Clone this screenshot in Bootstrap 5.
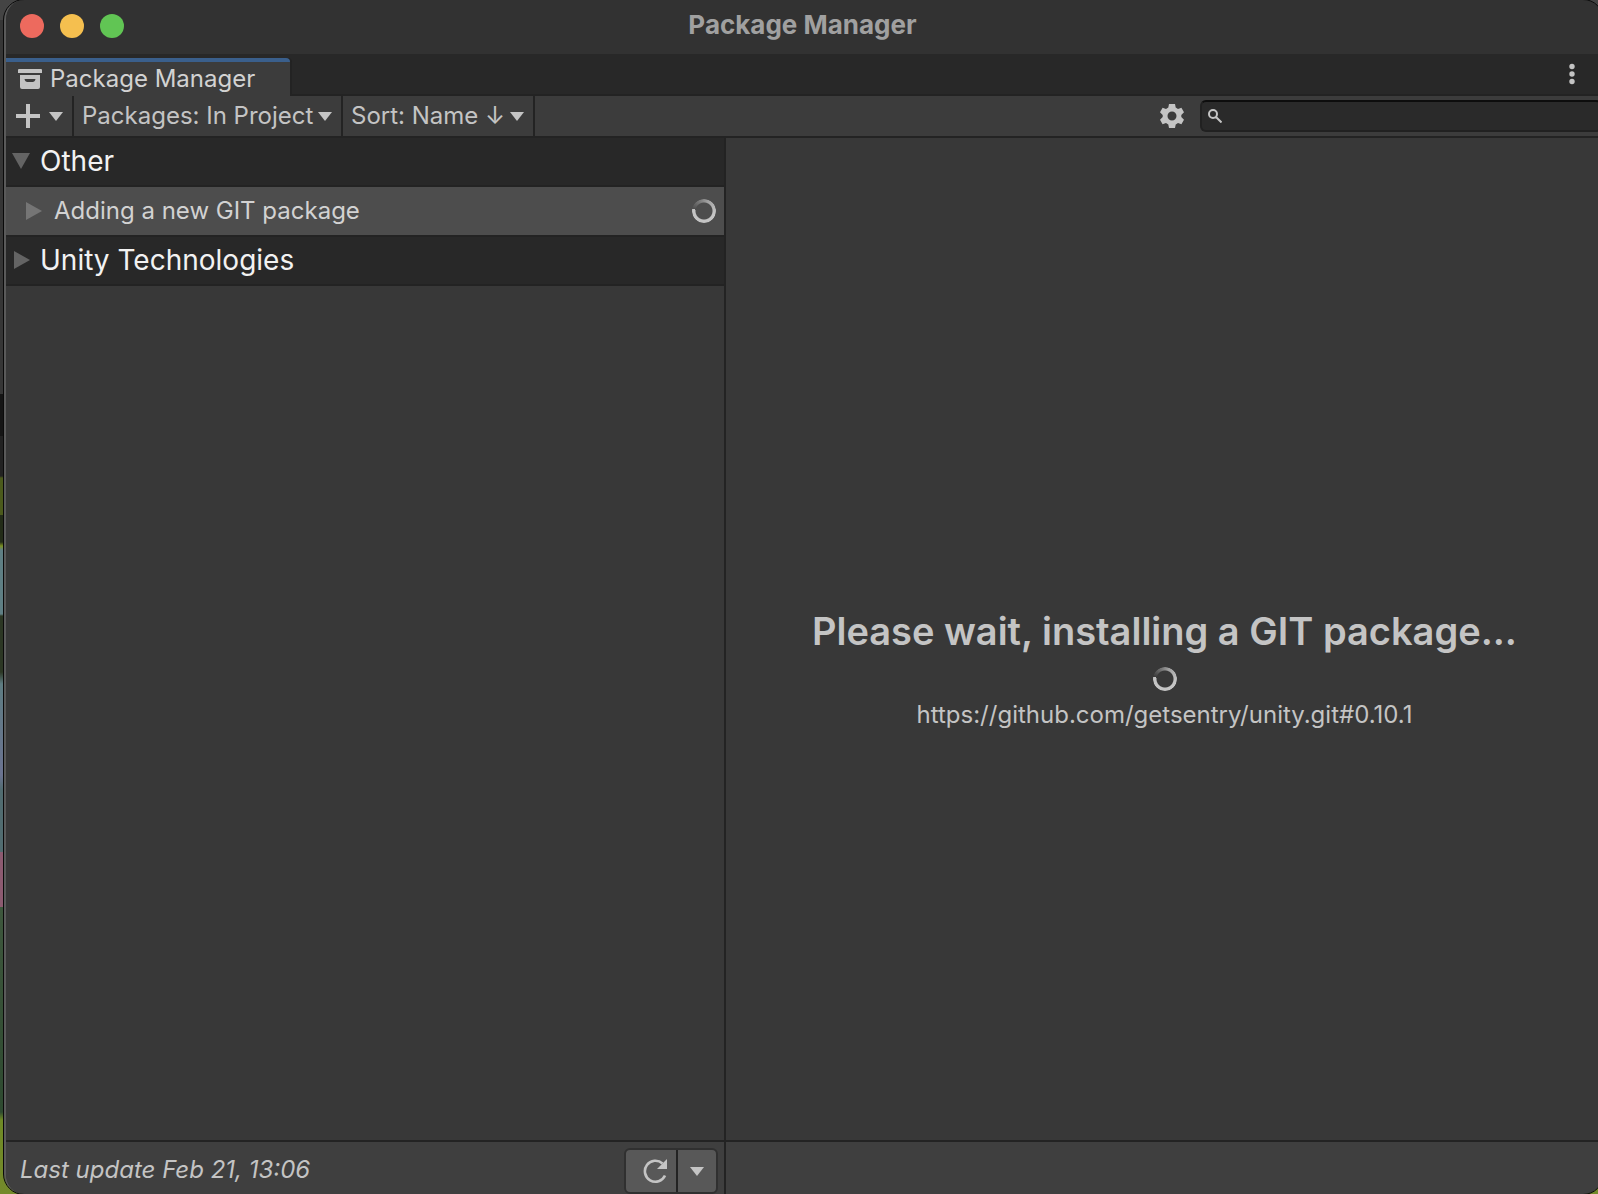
<!DOCTYPE html>
<html lang="en" data-bs-theme="dark">
<head>
<meta charset="utf-8">
<meta name="viewport" content="width=device-width, initial-scale=1">
<title>Package Manager</title>
<link rel="stylesheet" href="https://cdn.jsdelivr.net/npm/bootstrap@5.3.0/dist/css/bootstrap.min.css">
<style>
  :root { --line: #232323; --ink: #c4c4c4; --bar: #3c3c3c; --pane: #383838; --dark: #282828; }
  body {
    font-family: Inter, "Noto Sans", sans-serif; font-size: 24px; line-height: 32px; color: var(--ink);
    background: linear-gradient(#444 0 20px, #363636 20px 394px, #151515 394px 436px, #222 436px 476px,
      #4b5a1c 478px 515px, #232c18 515px 542px, #7a8f22 546px, #5f7f84 550px 614px, #2c3724 616px 672px,
      #5e7c82 684px, #6b7391 775px, #516c70 790px 852px, #8c5a70 852px 907px, #3e573d 907px, #2e4a30 1112px,
      #6f8a26 1120px, #748a2b 1194px);
  }
  svg { display: block; flex: none; fill: currentColor; }
  .app-window {
    margin-left: 4px; margin-right: -5px; background: var(--pane);
    border-left: 2px solid #5a5a5a; border-radius: 20px; outline: 1px solid #0a0a0a;
  }
  .title-bar { height: 54px; background: #323232; }
  .title-bar h1 { font-size: 26px; line-height: 32px; font-weight: 700; color: #a0a0a0; padding-bottom: 4px; }
  .lights { width: 160px; padding-left: 14px; gap: 16px; padding-bottom: 2px; }
  .title-end { width: 164px; }
  .light { width: 24px; height: 24px; border: 0; padding: 0; border-radius: 50%; }
  .light-red { background: #ed6a5e; } .light-yellow { background: #f5bf4f; } .light-green { background: #61c554; }
  .tab-strip { height: 42px; background: var(--dark); padding-top: 4px; box-shadow: inset 0 -2px var(--line); }
  .tab-item {
    color: #d2d2d2; background: var(--bar); border-top: 4px solid #3a5f8c; border-top-right-radius: 4px;
    padding: 0 35px 0 12px; gap: 8px; box-shadow: 2px 0 var(--line);
  }
  .tab-item svg { color: var(--ink); }
  .plain { background: transparent; border: 0; color: inherit; padding: 0; }
  .window-menu { padding: 0 28px 6px 8px; }
  .tool-bar { height: 42px; background: var(--bar); border-bottom: 2px solid var(--line); }
  .tool-cell { border: 0; border-right: 2px solid var(--line); border-radius: 0; color: var(--ink); }
  .tool-add { padding: 0 9px 0 10px; gap: 9px; }
  .tool-select {
    appearance: none; font: inherit; line-height: 32px; padding: 0 27px 0 8px; cursor: pointer;
    background: transparent url("data:image/svg+xml,%3Csvg xmlns='http://www.w3.org/2000/svg' width='14' height='9'%3E%3Cpath d='M0 0h14L7 9z' fill='%23c4c4c4'/%3E%3C/svg%3E") no-repeat right 9px top 16px;
  }
  .search-box {
    width: 402px; height: 32px; margin-right: 1px; background: #2a2a2a; border: 2px solid #212121; border-top-color: #0d0d0d;
    border-radius: 6px; padding-left: 6px;
  }
  .search-box input { background: transparent; border: 0; outline: 0; color: inherit; font-size: 20px; line-height: 24px; }
  .list-side { width: 720px; border-right: 2px solid var(--line); }
  .tree-row { height: 49px; width: 100%; border: 0; border-bottom: 2px solid var(--line); background: var(--dark); text-align: left; }
  .group-row { font-size: 28px; color: #f2f2f2; padding: 0 8px 1px 6px; gap: 10px; }
  .group-row svg { color: #646464; }
  .item-row { height: 50px; background: #4d4d4d; color: #d2d2d2; padding: 0 8px 0 20px; gap: 11px; }
  .item-row .fold { color: #757575; }
  .spin-ring {
    width: 24px; height: 24px; border-radius: 50%; flex: none;
    background: conic-gradient(from 280deg, transparent, #a0a0a0 100deg, #c4c4c4 180deg, #c4c4c4);
    -webkit-mask: radial-gradient(circle, transparent 8px, #000 9px);
    mask: radial-gradient(circle, transparent 8px, #000 9px);
  }
  .wait-pane { padding-top: 60px; }
  .wait-title { font-size: 38px; line-height: 48px; font-weight: 600; color: var(--ink); padding-bottom: 4px; }
  .foot-bar { height: 54px; background: #3f3f3f; border-top: 2px solid var(--line); border-bottom-left-radius: 18px; }
  .foot-left { width: 720px; border-right: 2px solid var(--line); padding: 6px 6px 0 14px; }
  .foot-left em { padding-bottom: 2px; }
  .foot-left .btn-group { border: 2px solid #303030; border-radius: 6px; height: 46px; background: #585858; }
</style>
</head>
<body class="vh-100 overflow-hidden">
<main class="app-window vh-100 d-flex flex-column overflow-hidden">
  <header class="title-bar d-flex align-items-center">
    <div class="lights d-flex">
      <button class="light light-red" aria-label="Close"></button>
      <button class="light light-yellow" aria-label="Minimize"></button>
      <button class="light light-green" aria-label="Zoom"></button>
    </div>
    <h1 class="m-0 flex-grow-1 text-center">Package Manager</h1>
    <div class="title-end"></div>
  </header>

  <nav class="tab-strip d-flex justify-content-between">
    <a href="#" class="tab-item d-flex align-items-center text-decoration-none">
      <svg width="24" height="20" viewBox="0 0 24 20"><path d="M1 0h22q1 0 1 1v3H0V1q0-1 1-1z"/><path fill-rule="evenodd" d="M2 6h20v12q0 2-2 2H4q-2 0-2-2zM6.500 10q.5 3 3 3h5q2.500 0 3-3z"/></svg>
      <span>Package Manager</span>
    </a>
    <button class="plain window-menu" aria-label="Window menu">
      <svg width="6" height="22" viewBox="0 0 6 22"><circle cx="3" cy="3.500" r="2.700"/><circle cx="3" cy="11" r="2.700"/><circle cx="3" cy="18.500" r="2.700"/></svg>
    </button>
  </nav>

  <div class="tool-bar d-flex align-items-stretch">
    <button class="plain tool-cell tool-add d-flex align-items-center" aria-label="Add package">
      <svg width="24" height="24" viewBox="0 0 24 24"><path d="M10 0h4v10h10v4H14v10h-4V14H0v-4h10z"/></svg>
      <svg width="14" height="9" viewBox="0 0 14 9"><path d="M0 0h14L7 9z"/></svg>
    </button>
    <select class="tool-cell tool-select" aria-label="Packages"><option>Packages: In Project</option></select>
    <select class="tool-cell tool-select" aria-label="Sort"><option>Sort: Name ↓</option></select>
    <div class="ms-auto d-flex align-items-center gap-3">
      <button class="plain" aria-label="Settings">
        <svg width="24" height="24" viewBox="0 0 24 24"><path fill-rule="evenodd" d="M9 0h6l.7 3.600 2.300 1.300 3.400-1.200 2.600 4.600L21.300 11v2l2.700 2.700-2.600 4.600-3.400-1.200-2.300 1.300L15 24H9l-.7-3.600L6 19.100l-3.400 1.200L0 15.700 2.700 13v-2L0 8.300l2.600-4.600L6 4.900l2.300-1.300zM12 7.500a4.500 4.500 0 1 0 0 9 4.500 4.500 0 0 0 0-9z"/></svg>
      </button>
      <label class="search-box d-flex align-items-center">
        <svg width="14" height="14" viewBox="0 0 14 14"><path d="M8 8l5.500 5.500M9 5a4 4 0 1 1-8 0 4 4 0 0 1 8 0z" fill="none" stroke="currentColor" stroke-width="2"/></svg>
        <input type="search" class="flex-grow-1" aria-label="Search packages">
      </label>
    </div>
  </div>

  <div class="d-flex flex-grow-1">
    <section class="list-side">
      <button class="tree-row group-row d-flex align-items-center">
        <svg width="18" height="16" viewBox="0 0 18 16"><path d="M0 0h18L9 16z"/></svg>Other
      </button>
      <button class="tree-row item-row d-flex align-items-center">
        <svg class="fold" width="17" height="18" viewBox="0 0 17 18"><path d="M0 0v18l16-9z"/></svg>
        <span class="flex-grow-1">Adding a new GIT package</span>
        <span class="spin-ring"></span>
      </button>
      <button class="tree-row group-row d-flex align-items-center">
        <svg width="18" height="18" viewBox="0 0 18 18"><path d="M2 0v18l16-9z"/></svg>Unity Technologies
      </button>
    </section>
    <section class="wait-pane flex-grow-1 d-flex flex-column align-items-center justify-content-center text-center">
      <h2 class="wait-title m-0">Please wait, installing a GIT package...</h2>
      <span class="spin-ring mt-2 mb-2" role="status" aria-label="Installing"></span>
      <p class="m-0">https://github.com/getsentry/unity.git#0.10.1</p>
    </section>
  </div>

  <footer class="foot-bar d-flex">
    <div class="foot-left d-flex align-items-center justify-content-between">
      <em>Last update Feb 21, 13:06</em>
      <div class="btn-group">
        <button class="plain tool-cell ps-3 pe-2" aria-label="Refresh">
          <svg width="26" height="26" viewBox="0 0 26 26"><path d="M23 17.500A10.500 10.500 0 1 1 20.500 5.500" fill="none" stroke="currentColor" stroke-width="2.600"/><path d="M25 1v10H15z"/></svg>
        </button>
        <button class="plain px-2" aria-label="Refresh options">
          <svg class="mx-1" width="14" height="9" viewBox="0 0 14 9"><path d="M0 0h14L7 9z"/></svg>
        </button>
      </div>
    </div>
  </footer>
</main>
<script src="https://cdn.jsdelivr.net/npm/bootstrap@5.3.0/dist/js/bootstrap.bundle.min.js"></script>
</body>
</html>
